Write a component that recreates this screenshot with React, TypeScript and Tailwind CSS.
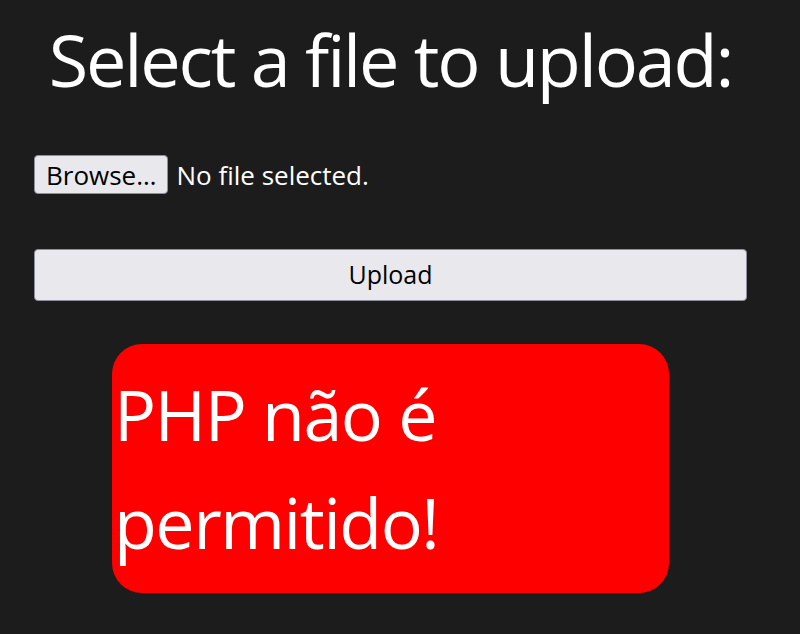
export default function App() {
  return (
    <div className="min-h-[634px] w-full bg-[#1c1c1c] font-['Open_Sans',sans-serif] text-white">
      <div className="ml-[34px] flex w-[713px] flex-col pt-[14px]">
        <h1 className="text-center text-[72px] leading-[90px] tracking-[-2.2px]">
          Select a file to upload:
        </h1>
        <div className="mt-[51px] flex items-center gap-[8px]">
          <button className="h-[39px] rounded-[4px] border border-[#8f8f9d] bg-[#e9e9ed] px-[11px] text-[26px] leading-none text-black">
            Browse…
          </button>
          <span className="text-[26px] leading-none">No file selected.</span>
        </div>
        <button className="mt-[55px] h-[52px] w-full rounded-[4px] border border-[#8f8f9d] bg-[#e9e9ed] text-[25px] text-black">
          Upload
        </button>
        <div className="mx-auto mt-[43px] h-[249px] w-[557px] rounded-[30px] bg-[#ff0000] px-[2px] pt-[16px]">
          <p className="text-[70px] leading-[108px] tracking-[-1.5px]">PHP não é permitido!</p>
        </div>
      </div>
    </div>
  );
}
